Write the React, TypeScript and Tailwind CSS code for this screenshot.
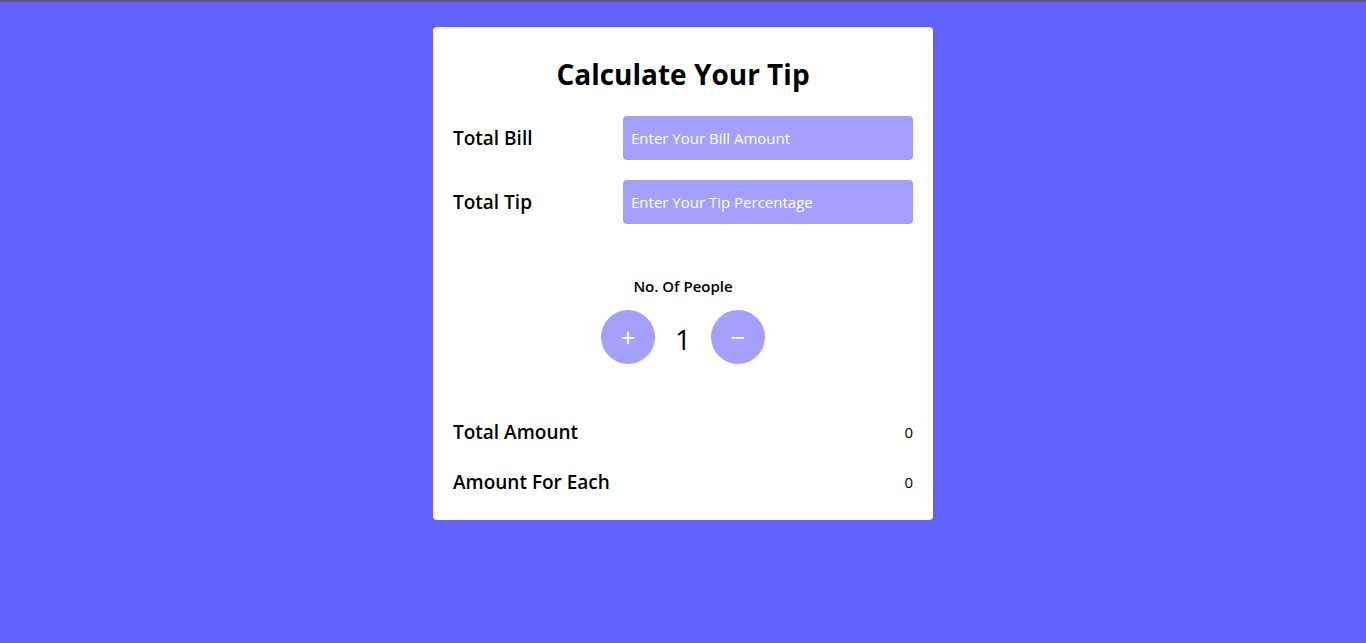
import React, { useState } from 'react';

const font = { fontFamily: '"Open Sans", "Noto Sans", sans-serif' };

const App: React.FC = () => {
  const [bill, setBill] = useState('');
  const [tip, setTip] = useState('');
  const [people, setPeople] = useState(1);

  const billNum = parseFloat(bill) || 0;
  const tipNum = parseFloat(tip) || 0;
  const total = billNum + (billNum * tipNum) / 100;
  const each = people > 0 ? total / people : 0;

  return (
    <div
      className="min-h-[643px] w-full bg-[#6161fd] border-t-2 border-[#5a5a80] flex justify-center items-start pt-[25px]"
      style={font}
    >
      <div className="w-[500px] bg-white rounded-[4px] px-5 pt-[27px] pb-[23px] flex flex-col">
        <h1 className="text-center text-[28px] font-bold leading-[40px] text-black">Calculate Your Tip</h1>

        <div className="flex items-center justify-between mt-[22px]">
          <label className="text-[19px] font-semibold text-black">Total Bill</label>
          <input
            className="w-[290px] h-[44px] rounded-[4px] bg-[#a3a1fd] px-2 text-[15px] text-white placeholder-white outline-none"
            placeholder="Enter Your Bill Amount"
            value={bill}
            onChange={(e) => setBill(e.target.value)}
          />
        </div>

        <div className="flex items-center justify-between mt-5">
          <label className="text-[19px] font-semibold text-black">Total Tip</label>
          <input
            className="w-[290px] h-[44px] rounded-[4px] bg-[#a3a1fd] px-2 text-[15px] text-white placeholder-white outline-none"
            placeholder="Enter Your Tip Percentage"
            value={tip}
            onChange={(e) => setTip(e.target.value)}
          />
        </div>

        <div className="flex flex-col items-center mt-[50px]">
          <div className="text-[15px] font-semibold text-black leading-[24px]">No. Of People</div>
          <div className="flex items-center gap-[14px] mt-[12px]">
            <button
              className="w-[54px] h-[54px] rounded-full bg-[#a3a1fd] text-white text-[26px] flex items-center justify-center"
              onClick={() => setPeople(people + 1)}
            >
              +
            </button>
            <span className="w-[28px] text-center text-[28px] text-black mt-[4px]">{people}</span>
            <button
              className="w-[54px] h-[54px] rounded-full bg-[#a3a1fd] text-white text-[26px] flex items-center justify-center"
              onClick={() => setPeople(people > 1 ? people - 1 : 1)}
            >
              −
            </button>
          </div>
        </div>

        <div className="flex items-center justify-between mt-[53px] h-[30px]">
          <span className="text-[19px] font-semibold text-black">Total Amount</span>
          <span className="text-[15px] text-black">{total ? total.toFixed(2) : 0}</span>
        </div>
        <div className="flex items-center justify-between mt-5 h-[30px]">
          <span className="text-[19px] font-semibold text-black">Amount For Each</span>
          <span className="text-[15px] text-black">{each ? each.toFixed(2) : 0}</span>
        </div>
      </div>
    </div>
  );
};

export default App;
